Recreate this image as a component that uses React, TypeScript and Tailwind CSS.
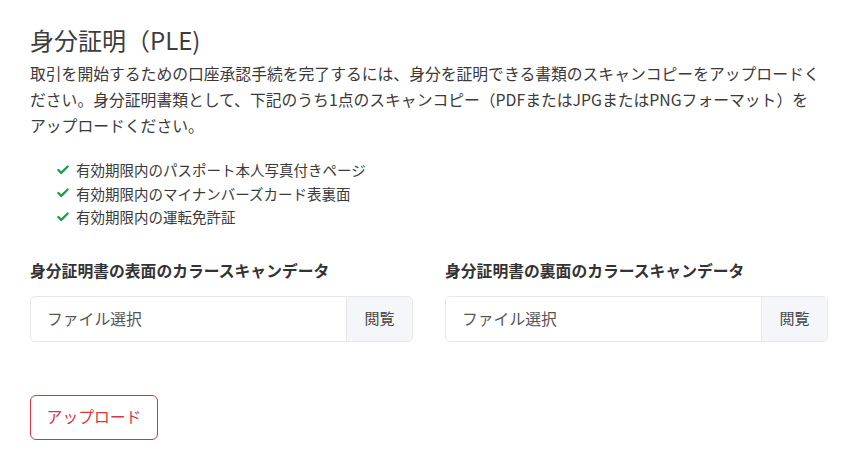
import React from 'react';
import { Check } from 'lucide-react';

const docs = [
  '有効期限内のパスポート本人写真付きページ',
  '有効期限内のマイナンバーズカード表裏面',
  '有効期限内の運転免許証',
];

const FileField = ({ label }: { label: string }) => (
  <div>
    <p className="font-bold text-[15.8px] leading-6 text-[#333]">{label}</p>
    <div className="mt-[13px] flex h-[46px] rounded-[5px] border border-[#e6e8eb] overflow-hidden">
      <div className="flex-1 flex items-center px-4 text-[15.8px] text-[#555]">ファイル選択</div>
      <div className="w-[66px] flex items-center justify-center bg-[#f4f6f9] border-l border-[#e6e8eb] text-[15px] text-[#444]">
        閲覧
      </div>
    </div>
  </div>
);

export default function App() {
  return (
    <div
      className="min-h-screen bg-white pl-[30px] pt-[24px] text-[#3a3a3a]"
      style={{ fontFamily: '"Noto Sans CJK JP", "Noto Sans", sans-serif' }}
    >
      <div className="w-[798px]">
        <h1 className="text-[24px] leading-8 text-[#3d3d3d]">身分証明（PLE)</h1>
        <p className="mt-[5px] text-[15.8px] leading-[26px] text-[#3a3a3a]">
          取引を開始するための口座承認手続を完了するには、身分を証明できる書類のスキャンコピーをアップロードく
          <br />
          ださい。身分証明書類として、下記のうち1点のスキャンコピー（PDFまたはJPGまたはPNGフォーマット）を
          <br />
          アップロードください。
        </p>

        <ul className="mt-[19px] pl-[26px]">
          {docs.map((d) => (
            <li key={d} className="flex items-center gap-[6px] text-[14.5px] leading-[23.5px] text-[#3a3a3a]">
              <Check className="h-[14px] w-[14px] text-[#1e9e4a]" strokeWidth={4} />
              <span>{d}</span>
            </li>
          ))}
        </ul>

        <div className="mt-[30px] grid grid-cols-2 gap-8">
          <FileField label="身分証明書の表面のカラースキャンデータ" />
          <FileField label="身分証明書の裏面のカラースキャンデータ" />
        </div>

        <button className="mt-[53px] h-[45px] w-[128px] rounded-[6px] border border-[#d9363e] text-[15.8px] text-[#d9363e] bg-white">
          アップロード
        </button>
      </div>
    </div>
  );
}
